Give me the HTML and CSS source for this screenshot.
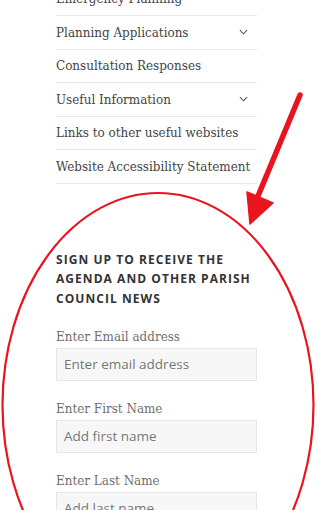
FILE: index.html
```html
<!DOCTYPE html>
<html>
<head>
<meta charset="utf-8">
<link rel="stylesheet" href="styles.css">
</head>
<body>
<div class="page">
  <ul class="menu">
    <li><span>Emergency Planning</span></li>
    <li><span>Planning Applications</span><svg class="chev" viewBox="0 0 10 6" width="9" height="6"><path d="M1 1 L5 5 L9 1" fill="none" stroke="#555" stroke-width="1.2"/></svg></li>
    <li><span>Consultation Responses</span></li>
    <li><span>Useful Information</span><svg class="chev" viewBox="0 0 10 6" width="9" height="6"><path d="M1 1 L5 5 L9 1" fill="none" stroke="#555" stroke-width="1.2"/></svg></li>
    <li><span>Links to other useful websites</span></li>
    <li><span>Website Accessibility Statement</span></li>
  </ul>
  <section class="signup">
    <h2 class="title">SIGN UP TO RECEIVE THE AGENDA AND OTHER PARISH COUNCIL NEWS</h2>
    <div class="field">
      <label class="label">Enter Email address</label>
      <div class="input">Enter email address</div>
    </div>
    <div class="field">
      <label class="label">Enter First Name</label>
      <div class="input">Add first name</div>
    </div>
    <div class="field">
      <label class="label">Enter Last Name</label>
      <div class="input">Add last name</div>
    </div>
  </section>
</div>
<svg class="overlay" width="324" height="510" viewBox="0 0 324 510">
  <ellipse cx="158" cy="405" rx="155.5" ry="212" fill="none" stroke="#e8141e" stroke-width="2.2"/>
  <path d="M300 95 L258 196" stroke="#e8141e" stroke-width="5.5" stroke-linecap="round" fill="none"/>
  <path d="M247 192 L273 203 L250 224 Z" fill="#e8141e" stroke="#e8141e" stroke-width="1.5" stroke-linejoin="round"/>
</svg>
</body>
</html>
```
FILE: styles.css
```css
html, body {
  margin: 0;
  padding: 0;
  background: #fff;
}
body {
  width: 324px;
  height: 510px;
  overflow: hidden;
  position: relative;
}
.page {
  padding-left: 56px;
  width: 201px;
}
.menu {
  list-style: none;
  margin: -17.5px 0 0 0;
  padding: 0;
}
.menu li {
  display: flex;
  justify-content: space-between;
  align-items: center;
  padding: 5.5px 0;
  line-height: 21.5px;
  border-bottom: 1px solid #e8e8e8;
  font-family: "DejaVu Serif", serif;
  font-stretch: condensed;
  font-size: 13.3px;
  color: #444;
  white-space: nowrap;
}
.chev {
  margin-right: 9px;
}
.signup {
  padding-top: 66px;
}
.title {
  margin: 0 0 19px 0;
  font-family: "Open Sans", sans-serif;
  font-weight: 700;
  font-size: 12px;
  line-height: 19.5px;
  letter-spacing: 1.05px;
  color: #333;
}
.field {
  display: flex;
  flex-direction: column;
  gap: 1px;
  margin-bottom: 18.5px;
}
.label {
  font-family: "DejaVu Serif", serif;
  font-stretch: condensed;
  font-size: 13.3px;
  line-height: 20px;
  color: #707070;
}
.input {
  height: 30.5px;
  border: 1px solid #e6e6e6;
  background: #f7f7f7;
  box-sizing: content-box;
  padding: 0 7px;
  display: flex;
  align-items: center;
  font-family: "Open Sans", sans-serif;
  font-size: 13.5px;
  color: #777;
}
.overlay {
  position: absolute;
  left: 0;
  top: 0;
}
```
